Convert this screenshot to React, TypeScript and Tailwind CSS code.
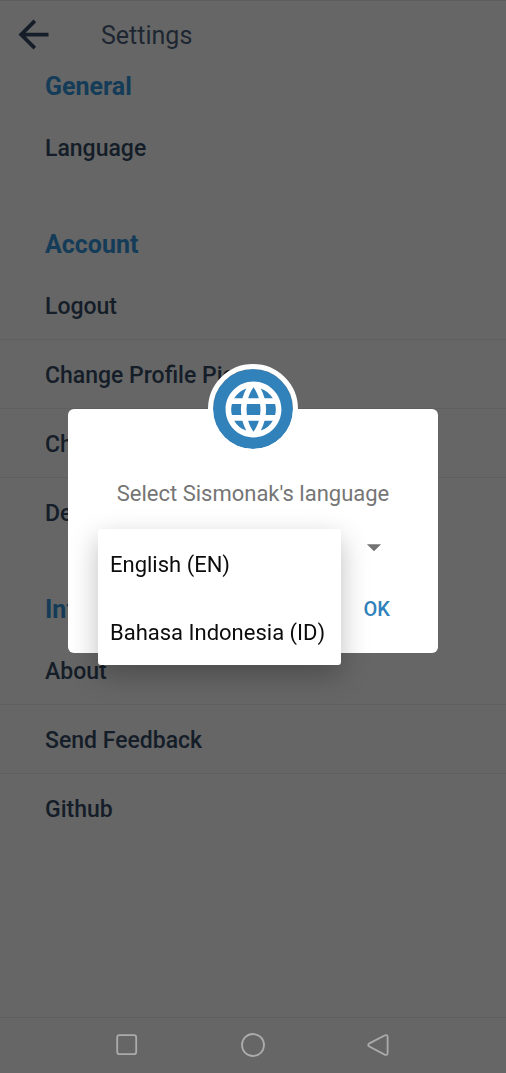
import { useState } from "react";
import { MdArrowBack, MdArrowDropDown, MdLanguage } from "react-icons/md";

const sections = [
  { title: "General", items: ["Language"] },
  {
    title: "Account",
    items: ["Logout", "Change Profile Picture", "Change Password", "Delete Account"],
  },
  { title: "Information", items: ["About", "Send Feedback", "Github"] },
];

const languages = [
  { code: "en", label: "English (EN)" },
  { code: "id", label: "Bahasa Indonesia (ID)" },
];

function Header() {
  return (
    <header className="flex h-[72px] items-start border-t border-[#5c5c5c] pt-[11px] pl-[11px]">
      <button type="button" aria-label="Back" className="text-[#141d28]">
        <MdArrowBack className="size-[45px]" />
      </button>
      <h1 className="ml-[45px] text-[25px] leading-[48px] text-[#1d2631]">Settings</h1>
    </header>
  );
}

function Section({ title, items }: { title: string; items: string[] }) {
  return (
    <section>
      <h2 className="mb-[11px] px-[45px] text-[25px] leading-[30px] font-bold text-[#143c58]">{title}</h2>
      <ul>
        {items.map((item) => (
          <li key={item} className="border-b border-[#5d6060] last:border-transparent">
            <button
              type="button"
              className="h-[68px] w-full px-[45px] pt-[3px] text-left text-[23px] leading-[30px] font-medium text-[#141d28]"
            >
              {item}
            </button>
          </li>
        ))}
      </ul>
    </section>
  );
}

function SystemNav() {
  return (
    <nav className="mt-auto flex h-14 items-center justify-center gap-[98px] border-t border-[#5e5e5e] pb-[2px] text-[#ababab]">
      <button type="button" aria-label="Recent apps">
        <svg className="size-7" viewBox="0 0 28 28" fill="none" stroke="currentColor" strokeWidth="1.8">
          <rect x="4.2" y="4.2" width="19" height="19" rx="2.2" />
        </svg>
      </button>
      <button type="button" aria-label="Home">
        <svg className="size-7" viewBox="0 0 28 28" fill="none" stroke="currentColor" strokeWidth="1.8">
          <circle cx="14" cy="14" r="11" />
        </svg>
      </button>
      <button type="button" aria-label="Go back">
        <svg className="size-7" viewBox="0 0 28 28" fill="none" stroke="currentColor" strokeWidth="1.8">
          <path d="M19.6 4.5 4.4 12.4Q2 14 4.4 15.6L19.6 23.6Q22.6 24.8 22.6 22V6Q22.6 3.2 19.6 4.5Z" />
        </svg>
      </button>
    </nav>
  );
}

function LanguageDialog() {
  const [language, setLanguage] = useState("en");
  return (
    <div className="fixed inset-0 flex items-center justify-center px-[68px] pb-[11px]">
      <div
        role="dialog"
        aria-modal="true"
        aria-labelledby="language-title"
        className="relative w-full rounded-md bg-white px-[30px] pt-[68px] pb-7"
      >
        <div className="absolute -top-[45px] left-1/2 flex size-[90px] -translate-x-1/2 items-center justify-center rounded-full border-[5px] border-white bg-[#3182ba] bg-clip-padding text-white">
          <MdLanguage className="size-[67px]" />
        </div>
        <label
          id="language-title"
          htmlFor="language"
          className="block pt-[2px] text-center text-[22px] leading-[30px] whitespace-nowrap text-[#757575]"
        >
          Select Sismonak's language
        </label>
        <div className="relative mt-5 flex h-9 items-center">
          <select
            id="language"
            value={language}
            onChange={(e) => setLanguage(e.target.value)}
            className="h-full w-full appearance-none pl-3 text-[22px] text-black"
          >
            {languages.map((l) => (
              <option key={l.code} value={l.code}>
                {l.label}
              </option>
            ))}
          </select>
          <MdArrowDropDown className="pointer-events-none absolute right-[17px] size-[34px] text-[#737373]" />
          <ul
            role="listbox"
            aria-label="Language"
            className="absolute top-0 left-0 z-10 w-[243px] rounded-[3px] bg-white shadow-[0_10px_28px_rgba(0,0,0,0.26)]"
          >
            {languages.map((l) => (
              <li key={l.code} role="option" aria-selected={l.code === language}>
                <button
                  type="button"
                  onClick={() => setLanguage(l.code)}
                  className="h-[68px] w-full px-3 pt-[3px] text-left text-[22px] leading-[30px] whitespace-nowrap text-[#0c0c0c]"
                >
                  {l.label}
                </button>
              </li>
            ))}
          </ul>
        </div>
        <div className="mt-7 flex justify-end pr-[18px]">
          <button type="button" className="text-[20px] leading-8 font-medium text-[#3182ba]">
            OK
          </button>
        </div>
      </div>
    </div>
  );
}

export default function App() {
  return (
    <div className="flex min-h-screen flex-col bg-[#666666] font-['Roboto',sans-serif]">
      <Header />
      <main className="flex flex-col gap-12">
        {sections.map((s) => (
          <Section key={s.title} title={s.title} items={s.items} />
        ))}
      </main>
      <SystemNav />
      <LanguageDialog />
    </div>
  );
}
